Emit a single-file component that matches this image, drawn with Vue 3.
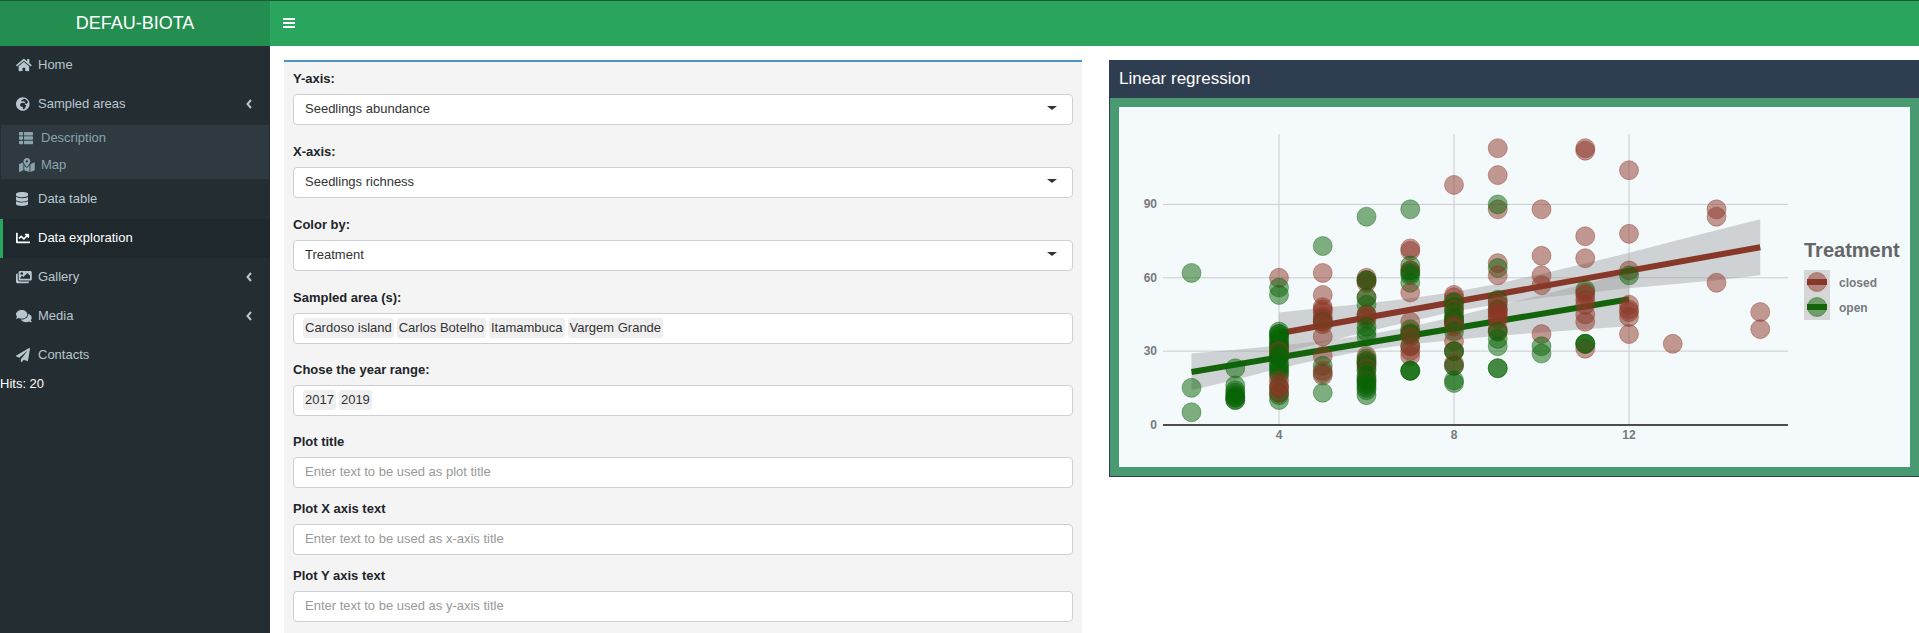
<script setup>
import { ref, computed } from 'vue'

const icons = {
  home: { w: 576, d: 'M280.37 148.26L96 300.11V464a16 16 0 0 0 16 16l112.06-.29a16 16 0 0 0 15.92-16V368a16 16 0 0 1 16-16h64a16 16 0 0 1 16 16v95.64a16 16 0 0 0 16 16.05L464 480a16 16 0 0 0 16-16V300L295.67 148.26a12.19 12.19 0 0 0-15.3 0zM571.6 251.47L488 182.56V44.05a12 12 0 0 0-12-12h-56a12 12 0 0 0-12 12v72.61L318.47 43a48 48 0 0 0-61 0L4.34 251.47a12 12 0 0 0-1.6 16.9l25.5 31A12 12 0 0 0 45.15 301l235.22-193.74a12.19 12.19 0 0 1 15.3 0L530.9 301a12 12 0 0 0 16.9-1.6l25.5-31a12 12 0 0 0-1.7-16.93z' },
  globe: { w: 496, d: 'M248 8C111.03 8 0 119.03 0 256s111.03 248 248 248 248-111.03 248-248S384.97 8 248 8zm160 215.5v6.93c0 5.87-3.32 11.24-8.57 13.86l-15.39 7.7a15.485 15.485 0 0 1-15.53-.97l-18.21-12.14a15.52 15.52 0 0 0-13.5-1.81l-2.65.88c-9.7 3.23-13.66 14.79-7.99 23.3l13.24 19.86c2.87 4.31 7.71 6.9 12.89 6.9h8.21c8.56 0 15.5 6.94 15.5 15.5v11.34c0 3.35-1.09 6.62-3.1 9.3l-18.74 24.98c-1.42 1.9-2.39 4.1-2.83 6.43l-4.3 22.83c-.62 3.29-2.29 6.29-4.76 8.56a159.608 159.608 0 0 0-25 29.16l-13.03 19.55a27.756 27.756 0 0 1-23.09 12.36c-10.51 0-20.12-5.94-24.82-15.34a78.902 78.902 0 0 1-8.33-35.29V367.5c0-8.56-6.94-15.5-15.5-15.5h-25.88c-14.49 0-28.38-5.76-38.63-16a54.659 54.659 0 0 1-16-38.63v-14.06c0-17.19 8.1-33.38 21.85-43.7l27.58-20.69a54.663 54.663 0 0 1 32.78-10.93h.89c8.48 0 16.85 1.97 24.43 5.77l14.72 7.36c3.68 1.84 7.93 2.14 11.83.84l47.31-15.77c6.33-2.11 10.6-8.03 10.6-14.7 0-8.56-6.94-15.5-15.5-15.5h-10.09c-4.11 0-8.05-1.63-10.96-4.54l-6.92-6.92a15.493 15.493 0 0 0-10.96-4.54H199.5c-8.56 0-15.5-6.94-15.5-15.5v-4.4c0-7.11 4.84-13.31 11.74-15.04l14.45-3.61c3.74-.94 7-3.23 9.14-6.44l8.08-12.11c2.87-4.31 7.71-6.9 12.89-6.9h24.21c8.56 0 15.5-6.94 15.5-15.5v-21.7C359.23 71.63 422.86 131.02 441.93 208H423.5c-8.56 0-15.5 6.94-15.5 15.5z' },
  list: { w: 512, d: 'M24 32h101a24 24 0 0 1 24 24v80a24 24 0 0 1-24 24H24a24 24 0 0 1-24-24V56a24 24 0 0 1 24-24zM205 32h283a24 24 0 0 1 24 24v80a24 24 0 0 1-24 24H205a24 24 0 0 1-24-24V56a24 24 0 0 1 24-24zM24 192h101a24 24 0 0 1 24 24v80a24 24 0 0 1-24 24H24a24 24 0 0 1-24-24v-80a24 24 0 0 1 24-24zM205 192h283a24 24 0 0 1 24 24v80a24 24 0 0 1-24 24H205a24 24 0 0 1-24-24v-80a24 24 0 0 1 24-24zM24 352h101a24 24 0 0 1 24 24v80a24 24 0 0 1-24 24H24a24 24 0 0 1-24-24v-80a24 24 0 0 1 24-24zM205 352h283a24 24 0 0 1 24 24v80a24 24 0 0 1-24 24H205a24 24 0 0 1-24-24v-80a24 24 0 0 1 24-24z' },
  map: { w: 576, d: 'M288 0c-69.59 0-126 56.41-126 126 0 56.26 82.35 158.8 113.9 196.02 6.39 7.54 17.82 7.54 24.2 0C331.65 284.8 414 182.26 414 126 414 56.41 357.59 0 288 0zm0 168c-23.2 0-42-18.8-42-42s18.8-42 42-42 42 18.8 42 42-18.8 42-42 42zM20.12 215.95A32.006 32.006 0 0 0 0 245.66v250.32c0 11.32 11.43 19.06 21.94 14.86L160 448V214.92c-8.84-15.98-16.07-31.54-21.25-46.42L20.12 215.95zM288 359.67c-14.07 0-27.38-6.18-36.51-16.96-19.66-23.2-40.57-49.62-59.49-76.72v182l192 64V266c-18.92 27.09-39.82 53.52-59.49 76.72-9.13 10.77-22.44 16.95-36.51 16.95zm266.06-198.51L416 224v288l139.88-55.95A31.996 31.996 0 0 0 576 426.34V176.02c0-11.32-11.43-19.06-21.94-14.86z' },
  database: { w: 448, d: 'M448 73.143v45.714C448 159.143 347.667 192 224 192S0 159.143 0 118.857V73.143C0 32.857 100.333 0 224 0s224 32.857 224 73.143zM448 176v102.857C448 319.143 347.667 352 224 352S0 319.143 0 278.857V176c48.125 33.143 136.208 48.572 224 48.572S399.874 209.143 448 176zm0 160v102.857C448 479.143 347.667 512 224 512S0 479.143 0 438.857V336c48.125 33.143 136.208 48.572 224 48.572S399.874 369.143 448 336z' },
  chart: { w: 512, d: 'M496 384H64V80c0-8.84-7.16-16-16-16H16C7.16 64 0 71.16 0 80v336c0 17.67 14.33 32 32 32h464c8.84 0 16-7.16 16-16v-32c0-8.84-7.16-16-16-16zM464 96H345.94c-21.38 0-32.09 25.85-16.97 40.97l32.4 32.4L288 242.75l-73.37-73.37c-12.5-12.5-32.76-12.5-45.25 0l-68.69 68.69c-6.25 6.25-6.25 16.38 0 22.63l22.62 22.62c6.25 6.25 16.38 6.25 22.63 0L192 237.25l73.37 73.37c12.5 12.5 32.76 12.5 45.25 0l96-96 32.4 32.4c15.12 15.12 40.97 4.41 40.97-16.97V112c.01-8.84-7.15-16-15.99-16z' },
  images: { w: 576, d: 'M480 416v16c0 26.51-21.49 48-48 48H48c-26.51 0-48-21.49-48-48V176c0-26.51 21.49-48 48-48h16v208c0 44.112 35.888 80 80 80h336zm96-80V80c0-26.51-21.49-48-48-48H144c-26.51 0-48 21.49-48 48v256c0 26.51 21.49 48 48 48h384c26.51 0 48-21.49 48-48zM256 128c0 26.51-21.49 48-48 48s-48-21.49-48-48 21.49-48 48-48 48 21.49 48 48zm-96 144l55.515-55.515c4.686-4.686 12.284-4.686 16.971 0L272 256l135.515-135.515c4.686-4.686 12.284-4.686 16.971 0L512 208v112H160v-48z' },
  comments: { w: 576, d: 'M416 192c0-88.4-93.1-160-208-160S0 103.6 0 192c0 34.3 14.1 65.9 38 92-13.4 30.2-35.5 54.2-35.8 54.5-2.2 2.3-2.8 5.7-1.5 8.7S4.8 352 8 352c36.6 0 66.9-12.3 88.7-25 32.2 15.7 70.3 25 111.3 25 114.9 0 208-71.6 208-160zm122 220c23.9-26 38-57.7 38-92 0-66.9-53.5-124.2-129.3-148.1.9 6.6 1.3 13.3 1.3 20.1 0 105.9-107.7 192-240 192-10.8 0-21.3-.8-31.7-1.9C207.8 439.6 281.8 480 368 480c41 0 79.1-9.2 111.3-25 21.8 12.7 52.1 25 88.7 25 3.2 0 6.1-1.9 7.3-4.8 1.3-2.9.7-6.3-1.5-8.7-.3-.3-22.4-24.2-35.8-54.5z' },
  plane: { w: 512, d: 'M476 3.2L12.5 270.6c-18.1 10.4-15.8 35.6 2.2 43.2L121 358.4l287.3-253.2c5.5-4.9 13.3 2.6 8.6 8.3L176 407v80.5c0 23.6 28.5 32.9 42.5 15.8L282 426l124.6 52.2c14.2 6 30.4-2.9 33-18.2l72-432C515 7.8 493.3-6.8 476 3.2z' }
}

const menu = [
  { text: 'Home', icon: 'home' },
  {
    text: 'Sampled areas', icon: 'globe', tree: true,
    children: [
      { text: 'Description', icon: 'list' },
      { text: 'Map', icon: 'map' }
    ]
  },
  { text: 'Data table', icon: 'database' },
  { text: 'Data exploration', icon: 'chart', active: true },
  { text: 'Gallery', icon: 'images', tree: true },
  { text: 'Media', icon: 'comments', tree: true },
  { text: 'Contacts', icon: 'plane' }
]

const selects = [
  { id: 'yaxis', label: 'Y-axis:', options: ['Seedlings abundance', 'Seedlings richness'], value: ref('Seedlings abundance') },
  { id: 'xaxis', label: 'X-axis:', options: ['Seedlings abundance', 'Seedlings richness'], value: ref('Seedlings richness') },
  { id: 'color', label: 'Color by:', options: ['Treatment', 'Sampled area'], value: ref('Treatment') }
]
const multis = [
  { id: 'areas', label: 'Sampled area (s):', items: ['Cardoso island', 'Carlos Botelho', 'Itamambuca', 'Vargem Grande'] },
  { id: 'years', label: 'Chose the year range:', items: ['2017', '2019'] }
]
const texts = [
  { id: 'title', label: 'Plot title', hint: 'Enter text to be used as plot title' },
  { id: 'xtext', label: 'Plot X axis text', hint: 'Enter text to be used as x-axis title' },
  { id: 'ytext', label: 'Plot Y axis text', hint: 'Enter text to be used as y-axis title' }
]

// Data space to plot space
const px = v => 160 + (v - 4) * 43.75
const py = v => 317.5 - v * 2.445

// Values per richness class; c = closed, o = open, drawn in order
const data = {
  2: 'o62 o15 o5',
  3: 'o23 o16 o14 o13 o12 o11 o11 o10 o10',
  4: 'c60 o56 o53 c30 c28 c32 o38 o37 o37 o36 o35 o34 o33 o32 o31 c30 o29 o28 o27 o25 o24 o23 o22 o21 o20 c18 o15 o13 o12 o10 c16 c15 c13',
  5: 'o73 c62 c53 c48 c47 c46 c44 c43 o42 c42 c41 c36 c28 o24 o21 c22 c20 o13',
  6: 'o85 c60 o59 c58 c59 o59 c52 o52 o49 o45 c45 c43 c44 o40 o38 o36 c28 o27 c26 o26 c25 o25 o24 c23 o22 o20 o19 c18 o18 o17 o16 o15 o14 o12',
  7: 'o88 c72 c71 o65 o63 c63 o62 o61 o58 c54 c42 o39 c38 o37 o37 c36 o32 c32 c30 c28 o22 o22 o22',
  8: 'c98 c53 c52 c50 o50 o48 c47 o46 c44 o44 o43 o42 c42 c41 o42 c40 o38 c34 o30 c30 o30 c25 c24 o24 o18 o17',
  9: 'c113 c102 c88 o90 c66 o64 c61 o51 c50 c49 o47 c47 c46 c45 c44 c43 c39 c38 o38 o35 o32 o23 o23',
  10: 'c88 c69 c61 c57 c37 o32 o29',
  11: 'c112 c113 c77 c68 o55 c54 c53 c51 c49 c45 c42 o33 o33 c31 o33',
  12: 'c104 c78 c63 o61 c49 c47 c46 c44 c37',
  13: 'c33',
  14: 'c88 c85 c58',
  15: 'c46 c39'
}
const points = Object.entries(data).flatMap(([x, list]) =>
  list.split(' ').map((p, i) => ({
    key: x + '-' + i,
    kind: p[0] === 'c' ? 'closed' : 'open',
    x: px(+x),
    y: py(+p.slice(1))
  }))
)

const band = rows => {
  const up = rows.map(r => px(r[0]) + ',' + py(r[2]))
  const down = rows.map(r => px(r[0]) + ',' + py(r[1])).reverse()
  return up.concat(down).join(' ')
}
const bandClosed = band([[4, 29, 45.8], [5, 33.4, 47.7], [6, 37.9, 49.5], [7, 42.1, 51.6], [8, 46.2, 54.2], [9, 49.2, 57.6], [10, 51.7, 61.6], [11, 53.8, 65.8], [12, 55.7, 70.2], [13, 57.4, 74.8], [14, 59, 79.4], [15, 61, 83.9]])
const bandOpen = band([[2, 14, 29], [3, 18.3, 30.6], [4, 22.9, 32.3], [5, 26.9, 34.2], [6, 30.4, 36.6], [7, 32.8, 40], [8, 34.6, 44.1], [9, 36.3, 48.5], [10, 37.6, 53], [11, 39, 57.6], [12, 40.2, 62.2]])
const yTicks = [0, 30, 60, 90]
const xTicks = [4, 8, 12]
const collapsed = ref(false)
const shellClass = computed(() => ({ shell: true, collapsed: collapsed.value }))
</script>

<template>
  <div :class="shellClass">
    <header class="top">
      <a class="logo" href="#">DEFAU-BIOTA</a>
      <nav class="navbar">
        <button class="toggle" type="button" aria-label="Toggle navigation" @click="collapsed = !collapsed">
          <svg width="12" height="12" viewBox="0 0 12 12"><path d="M0 0h12v2H0zM0 4h12v2H0zM0 8h12v2H0z" /></svg>
        </button>
      </nav>
    </header>

    <div class="body">
      <aside class="sidebar">
        <ul class="menu">
          <li v-for="item in menu" :key="item.text">
            <a href="#" class="row" :class="{ active: item.active }">
              <span class="ico"><svg height="14" :viewBox="`0 0 ${icons[item.icon].w} 512`"><path :d="icons[item.icon].d" /></svg></span>
              <span>{{ item.text }}</span>
              <svg v-if="item.tree" class="chev" width="6" height="10" viewBox="0 0 6 10"><path d="M5 1L1.500 5L5 9" /></svg>
            </a>
            <ul v-if="item.children" class="sub">
              <li v-for="c in item.children" :key="c.text">
                <a href="#" class="subrow">
                  <span class="ico"><svg height="14" :viewBox="`0 0 ${icons[c.icon].w} 512`"><path :d="icons[c.icon].d" /></svg></span>
                  <span>{{ c.text }}</span>
                </a>
              </li>
            </ul>
          </li>
        </ul>
        <div class="hits">Hits: 20</div>
      </aside>

      <main class="content">
        <form class="panel" @submit.prevent>
          <div v-for="s in selects" :key="s.id" class="group">
            <label :for="s.id">{{ s.label }}</label>
            <div class="pick">
              <select :id="s.id" v-model="s.value.value" class="control">
                <option v-for="o in s.options" :key="o">{{ o }}</option>
              </select>
              <span class="caret"></span>
            </div>
          </div>
          <div v-for="m in multis" :key="m.id" class="group multi">
            <label :for="m.id">{{ m.label }}</label>
            <div class="control chips">
              <span v-for="c in m.items" :key="c" class="chip">{{ c }}</span>
              <input :id="m.id" class="more" type="text" />
            </div>
          </div>
          <div v-for="t in texts" :key="t.id" class="group text">
            <label :for="t.id">{{ t.label }}</label>
            <input :id="t.id" class="control" type="text" :placeholder="t.hint" />
          </div>
        </form>

        <section class="box">
          <h3>Linear regression</h3>
          <div class="frame">
            <svg class="plot" viewBox="0 0 791 360" role="img" aria-label="Linear regression">
              <line v-for="t in yTicks" :key="'y' + t" class="grid" x1="44" x2="669" :y1="py(t)" :y2="py(t)" />
              <line v-for="t in xTicks" :key="'x' + t" class="grid" :x1="px(t)" :x2="px(t)" y1="27" y2="317" />
              <polygon class="band" :points="bandClosed" />
              <line class="fit closed" :x1="px(4)" :y1="py(37.3)" :x2="px(15)" :y2="py(72.5)" />
              <polygon class="band" :points="bandOpen" />
              <line class="fit open" :x1="px(2)" :y1="py(21.5)" :x2="px(12)" :y2="py(51.2)" />
              <circle v-for="p in points" :key="p.key" :class="['dot', p.kind]" :cx="p.x" :cy="p.y" r="9.500" />
              <path class="axis" d="M44 317h625v2H44z" />
              <text v-for="t in yTicks" :key="'yt' + t" class="tick" x="38" :y="py(t) + 4" text-anchor="end">{{ t }}</text>
              <text v-for="t in xTicks" :key="'xt' + t" class="tick" :x="px(t)" y="332" text-anchor="middle">{{ t }}</text>
              <text class="ltitle" x="685" y="150">Treatment</text>
              <rect class="key" x="685" y="163" width="26" height="50" />
              <circle class="dot closed" cx="698" cy="175" r="9.500" />
              <line class="fit closed" x1="688" x2="708" y1="175" y2="175" />
              <circle class="dot open" cx="698" cy="200" r="9.500" />
              <line class="fit open" x1="688" x2="708" y1="200" y2="200" />
              <text class="tick" x="720" y="180">closed</text>
              <text class="tick" x="720" y="205">open</text>
            </svg>
          </div>
        </section>
      </main>
    </div>
  </div>
</template>

<style>
body {
  margin: 0;
  background: #fff;
}
</style>

<style scoped>
* {
  box-sizing: border-box;
}
.shell {
  display: flex;
  flex-direction: column;
  min-height: 100vh;
  font-family: "Liberation Sans", Arial, sans-serif;
  font-size: 13px;
  line-height: 18px;
  color: #212529;
}
a {
  color: inherit;
  text-decoration: none;
}
ul {
  list-style: none;
  margin: 0;
  padding: 0;
}
.top {
  display: flex;
  height: 46px;
  border-top: 1px solid #1c5a35;
  background: #29a55d;
}
.logo {
  width: 270px;
  background: #238e4f;
  color: #fff;
  font-size: 18px;
  line-height: 44px;
  text-align: center;
}
.navbar {
  display: flex;
  align-items: center;
  flex: 1;
}
.toggle {
  display: flex;
  border: 0;
  padding: 12px 13px;
  background: none;
  cursor: pointer;
}
.toggle svg {
  fill: #fff;
}
.body {
  display: flex;
  flex: 1;
}
.sidebar {
  width: 270px;
  flex: none;
  background: #242d32;
  color: #b8c7ce;
}
.collapsed .sidebar {
  display: none;
}
.row {
  display: flex;
  align-items: center;
  padding: 11px 18px 12px 13px;
  border-left: 3px solid transparent;
  line-height: 16px;
}
.row.active {
  border-left-color: #29a55d;
  background: #1f282d;
  color: #fff;
}
.ico {
  display: flex;
  width: 22px;
}
.ico svg {
  fill: currentColor;
}
.chev {
  margin-left: auto;
  fill: none;
  stroke: currentColor;
  stroke-width: 2;
}
.sub {
  margin: 1px;
  background: #2e3a3f;
  color: #8aa4af;
}
.subrow {
  display: flex;
  align-items: center;
  padding: 5px 5px 6px 18px;
  line-height: 16px;
}
.hits {
  color: #fff;
}
.content {
  flex: 1;
  min-width: 0;
  display: grid;
  grid-template-columns: 798fr 810fr;
  column-gap: 27px;
  align-items: start;
  padding: 14px 0 0 14px;
  background: #fff;
}
.panel {
  border-top: 2px solid #4a94c6;
  padding: 8px 9px 0;
  background: #f4f4f4;
}
.group {
  padding-bottom: 18px;
}
.group.multi {
  padding-bottom: 17px;
}
.group.text {
  padding-bottom: 12px;
}
.group.text:last-child {
  padding-bottom: 11px;
}
label {
  display: block;
  margin-bottom: 6px;
  font-weight: 700;
}
.control {
  display: block;
  width: 100%;
  height: 31px;
  border: 1px solid #ced0d6;
  border-radius: 4px;
  padding: 0 11px 2px;
  background: #fff;
  color: #333;
  font: inherit;
  appearance: none;
}
.control::placeholder {
  color: #999;
  opacity: 1;
}
.pick {
  position: relative;
}
.caret {
  position: absolute;
  right: 16px;
  top: 12px;
  border: 5px solid transparent;
  border-top: 4px solid #333;
  border-bottom: 0;
  pointer-events: none;
}
.chips {
  display: flex;
  align-items: center;
  gap: 3px;
  padding: 0 9px 2px;
}
.chip {
  border-radius: 3px;
  padding: 1px 2px;
  background: #efefef;
}
.more {
  flex: 1;
  min-width: 0;
  border: 0;
  padding: 0;
  background: none;
  font: inherit;
  outline: none;
}
.box {
  border: 1px solid #2f3d50;
  border-right: 0;
  background: #4a9a71;
}
h3 {
  margin: 0;
  padding: 8px 9px 10px;
  background: #2f3d50;
  color: #fff;
  font-size: 17px;
  font-weight: 400;
  line-height: 19px;
}
.frame {
  padding: 9px;
}
.plot {
  display: block;
  width: 100%;
  background: #f4f9fc;
}
.grid {
  stroke: #cbcdce;
}
.axis {
  fill: #4c4c4c;
}
.band {
  fill: #999;
  fill-opacity: 0.4;
}
.fit {
  stroke-width: 6;
}
.fit.closed {
  stroke: #873829;
}
.fit.open {
  stroke: #14640c;
}
.dot {
  fill-opacity: 0.5;
  stroke-opacity: 0.4;
}
.dot.closed {
  fill: #8b3626;
  stroke: #8b3626;
}
.dot.open {
  fill: #086404;
  stroke: #086404;
}
.key {
  fill: #d6d6d6;
}
.tick {
  fill: #777a7c;
  font-size: 12px;
  font-weight: 700;
}
.ltitle {
  fill: #666;
  font-size: 20px;
  font-weight: 700;
}
</style>
